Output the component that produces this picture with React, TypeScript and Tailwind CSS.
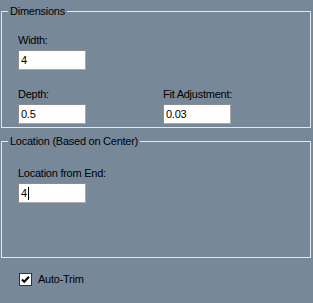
import React from "react";

function Field({ label, value, caret }: { label: string; value: string; caret?: boolean }) {
  return (
    <div className="flex flex-col">
      <div className="h-[13px] leading-[13px] whitespace-nowrap">{label}</div>
      <div className="mt-[3px] h-[20px] w-[68px] bg-white border border-[#a9a9a9] border-t-[#8c8c8c] border-l-[#8c8c8c] flex items-center pl-[2px] leading-[13px]">
        <span>{value}</span>
        {caret && <span className="ml-px inline-block w-px h-[13px] bg-black" />}
      </div>
    </div>
  );
}

export default function App() {
  return (
    <div
      className="w-[313px] h-[303px] bg-[#778899] text-black text-[11px] leading-[13px] tracking-[-0.25px] overflow-hidden"
      style={{ fontFamily: '"Liberation Sans", Arial, sans-serif' }}
    >
      <fieldset className="ml-[1px] mt-[5px] w-[310px] h-[123px] border border-[#e6e6e6] p-0 m-0 min-w-0">
        <legend className="ml-[6px] px-[2px] h-[13px] leading-[13px]">Dimensions</legend>
        <div className="pl-[16px] pt-[16px] flex flex-col">
          <Field label="Width:" value="4" />
          <div className="mt-[18px] flex">
            <div className="w-[145px]">
              <Field label="Depth:" value="0.5" />
            </div>
            <Field label="Fit Adjustment:" value="0.03" />
          </div>
        </div>
      </fieldset>
      <fieldset className="ml-[1px] mt-[7px] w-[310px] h-[123px] border border-[#e6e6e6] p-0 m-0 min-w-0">
        <legend className="ml-[6px] px-[2px] h-[13px] leading-[13px]">Location (Based on Center)</legend>
        <div className="pl-[16px] pt-[19px] flex flex-col">
          <Field label="Location from End:" value="4" caret />
        </div>
      </fieldset>
      <div className="mt-[14px] ml-[19px] flex items-center">
        <div className="w-[13px] h-[13px] bg-white border border-[#333333] flex items-center justify-center">
          <svg width="11" height="11" viewBox="0 0 11 11">
            <path d="M2 5.5 L4.2 7.8 L9 2.8" fill="none" stroke="#000" strokeWidth="2" />
          </svg>
        </div>
        <span className="ml-[6px] mt-px">Auto-Trim</span>
      </div>
    </div>
  );
}
